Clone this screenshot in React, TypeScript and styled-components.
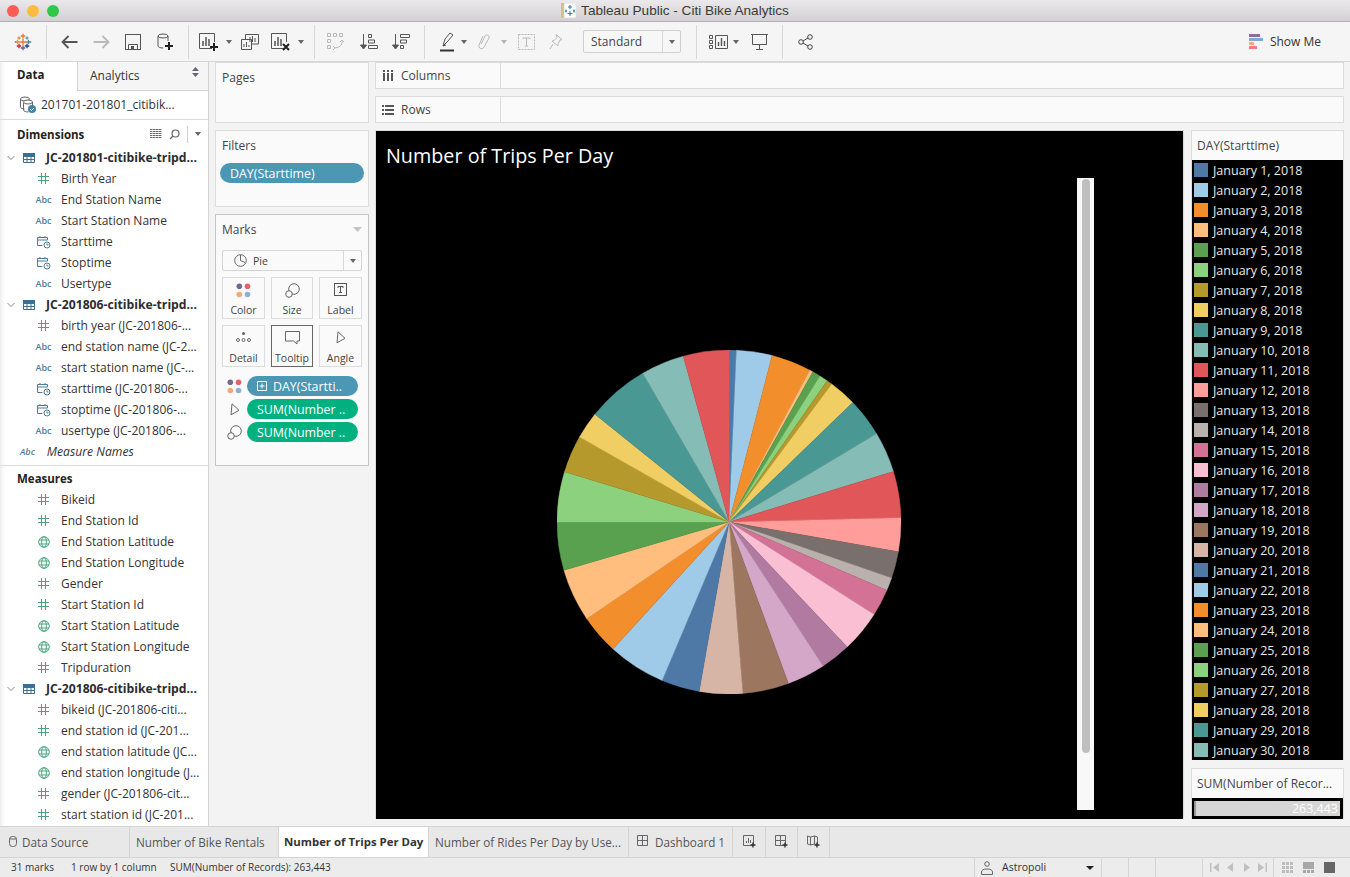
import * as React from 'react';
import styled, { createGlobalStyle } from 'styled-components';

const GlobalStyle = createGlobalStyle`
  html, body {
    margin: 0;
    padding: 0;
    height: 100%;
    overflow: hidden;
    background: #f3f3f3;
    font-family: "Open Sans", "Liberation Sans", sans-serif;
  }
  * { box-sizing: border-box; }
`;

const COLORS = [
  '#4e79a7', '#a0cbe8', '#f28e2b', '#ffbe7d', '#59a14f', '#8cd17d', '#b6992d', '#f1ce63', '#499894', '#86bcb6',
  '#e15759', '#ff9d9a', '#79706e', '#bab0ac', '#d37295', '#fabfd2', '#b07aa1', '#d4a6c8', '#9d7660', '#d7b5a6'
];

// end angle of every slice, clockwise from the top
const SLICE_ENDS = [
  2.5, 14.5, 28, 29.2, 31.9, 34.8, 36.7, 46, 59.1, 72.9, 88.6, 100, 109, 113.4, 122.5, 136.6, 146.8, 159.8, 175.4,
  190, 202.9, 222.4, 235.8, 253.7, 270, 287, 299.6, 308.8, 329.9, 344.6, 360
];

type FieldKind = 'hash' | 'abc' | 'date' | 'geo';
type Field = { kind: FieldKind; name: string };

const DIM_ONE: Field[] = [
  { kind: 'hash', name: 'Birth Year' },
  { kind: 'abc', name: 'End Station Name' },
  { kind: 'abc', name: 'Start Station Name' },
  { kind: 'date', name: 'Starttime' },
  { kind: 'date', name: 'Stoptime' },
  { kind: 'abc', name: 'Usertype' }
];
const DIM_TWO: Field[] = [
  { kind: 'hash', name: 'birth year (JC-201806-...' },
  { kind: 'abc', name: 'end station name (JC-2...' },
  { kind: 'abc', name: 'start station name (JC-...' },
  { kind: 'date', name: 'starttime (JC-201806-...' },
  { kind: 'date', name: 'stoptime (JC-201806-...' },
  { kind: 'abc', name: 'usertype (JC-201806-...' }
];
const MEASURES: Field[] = [
  { kind: 'hash', name: 'Bikeid' },
  { kind: 'hash', name: 'End Station Id' },
  { kind: 'geo', name: 'End Station Latitude' },
  { kind: 'geo', name: 'End Station Longitude' },
  { kind: 'hash', name: 'Gender' },
  { kind: 'hash', name: 'Start Station Id' },
  { kind: 'geo', name: 'Start Station Latitude' },
  { kind: 'geo', name: 'Start Station Longitude' },
  { kind: 'hash', name: 'Tripduration' }
];
const MEASURES_TWO: Field[] = [
  { kind: 'hash', name: 'bikeid (JC-201806-citi...' },
  { kind: 'hash', name: 'end station id (JC-201...' },
  { kind: 'geo', name: 'end station latitude (JC...' },
  { kind: 'geo', name: 'end station longitude (J...' },
  { kind: 'hash', name: 'gender (JC-201806-cit...' },
  { kind: 'hash', name: 'start station id (JC-201...' }
];

const Window = styled.div`
  width: 1350px;
  height: 877px;
  display: flex;
  flex-direction: column;
  overflow: hidden;
  background: #f3f3f3;
  color: #333;
`;

const TitleBar = styled.div`
  height: 22px;
  flex: none;
  display: flex;
  align-items: center;
  position: relative;
  justify-content: center;
  gap: 5px;
  background: linear-gradient(#ebe9eb, #d2d0d2);
  border-bottom: 1px solid #b0b0b0;
  font-family: "Liberation Sans", sans-serif;
  font-size: 13.6px;
  color: #3a3a3a;
`;

const Lights = styled.div`
  position: absolute;
  left: 7px;
  top: 5px;
  display: flex;
  gap: 8px;
`;

const Light = styled.span<{ $c: string }>`
  width: 12px;
  height: 12px;
  border-radius: 50%;
  background: ${p => p.$c};
`;

const Toolbar = styled.div`
  height: 40px;
  flex: none;
  display: flex;
  align-items: center;
  background: #f5f5f5;
  border-bottom: 1px solid #d6d6d6;
`;

const Slot = styled.div<{ $w: number; $off?: boolean }>`
  width: ${p => p.$w}px;
  height: 100%;
  flex: none;
  display: flex;
  align-items: center;
  justify-content: center;
  color: ${p => (p.$off ? '#b9b9b9' : '#555')};
`;

const Sep = styled.div<{ $l: number; $r: number }>`
  width: 1px;
  height: 34px;
  flex: none;
  margin: 0 ${p => p.$r}px 0 ${p => p.$l}px;
  background: #d8d8d8;
`;

const Caret = styled.span<{ $off?: boolean }>`
  width: 0;
  height: 0;
  border-left: 3.5px solid transparent;
  border-right: 3.5px solid transparent;
  border-top: 4px solid ${p => (p.$off ? '#b5b5b5' : '#666')};
`;

const BlackCaret = styled(Caret)`
  margin-left: auto;
  border-left-width: 4px;
  border-right-width: 4px;
  border-top: 4px solid #222;
`;

const Select = styled.div`
  width: 98px;
  height: 23px;
  margin-left: 15px;
  flex: none;
  display: flex;
  align-items: center;
  background: #f7f7f7;
  border: 1px solid #cfcfcf;
  border-radius: 2px;
  font-size: 12px;
  color: #444;
`;

const SelectText = styled.div`
  flex: 1;
  padding-left: 7px;
`;

const SelectArrow = styled.div`
  width: 18px;
  height: 100%;
  display: flex;
  align-items: center;
  justify-content: center;
  border-left: 1px solid #d8d8d8;
`;

const ShowMe = styled.div`
  margin-left: auto;
  margin-right: 29px;
  display: flex;
  align-items: center;
  gap: 6px;
  font-size: 12px;
  color: #333;
`;

const Body = styled.div`
  height: 764px;
  flex: none;
  display: flex;
`;

const DataPane = styled.aside`
  width: 209px;
  flex: none;
  background: #fff;
  border-right: 1px solid #d4d4d4;
  box-shadow: inset 5px 0 5px -4px #e4e4e4;
  overflow: hidden;
`;

const PaneTabs = styled.div`
  display: flex;
  height: 29px;
`;

const DataTab = styled.div`
  width: 78px;
  padding: 5px 0 0 17px;
  font-size: 11.5px;
  font-weight: 700;
  color: #222;
  border-right: 1px solid #d4d4d4;
`;

const AnalyticsTab = styled.div`
  flex: 1;
  display: flex;
  justify-content: space-between;
  padding: 5px 9px 0 12px;
  font-size: 12px;
  color: #333;
  background: #f5f5f5;
  border-bottom: 1px solid #d4d4d4;
`;

const SourceRow = styled.div`
  height: 29px;
  display: flex;
  align-items: center;
  gap: 4px;
  padding: 0 0 1px 19px;
  border-bottom: 1px solid #dcdcdc;
  font-size: 12px;
  color: #333;
  white-space: nowrap;
`;

const SectionHead = styled.div<{ $h: number }>`
  height: ${p => p.$h}px;
  display: flex;
  align-items: center;
  padding: 1px 0 0 17px;
  font-size: 11.5px;
  font-weight: 700;
  color: #222;
`;

const HeadTools = styled.div`
  margin-left: auto;
  display: flex;
  align-items: center;
  gap: 7px;
  padding-right: 7px;
  color: #666;
`;

const HeadDivider = styled.span`
  width: 1px;
  height: 17px;
  background: #d0d0d0;
`;

const GroupRow = styled.div`
  height: 21px;
  display: flex;
  align-items: center;
  padding-left: 7px;
  font-size: 12.2px;
  font-weight: 700;
  color: #2c2c2c;
  white-space: nowrap;
`;

const GroupName = styled.span`
  margin-left: 11px;
`;

const TableMark = styled.span`
  margin-left: 8px;
  display: flex;
`;

const FieldRow = styled.div`
  height: 21px;
  display: flex;
  align-items: center;
  padding-left: 33px;
  font-size: 12px;
  color: #333;
  white-space: nowrap;
`;

const FieldMark = styled.span<{ $c: string }>`
  width: 21px;
  margin-right: 7px;
  flex: none;
  display: flex;
  justify-content: center;
  color: ${p => p.$c};
`;

const AbcText = styled.span`
  font-size: 9px;
  font-weight: 600;
  color: #4e7d97;
`;

const NamesRow = styled.div`
  height: 21px;
  display: flex;
  align-items: center;
  padding: 0 0 0 20px;
  font-size: 12.2px;
  font-style: italic;
  color: #333;
  gap: 12px;
`;

const PaneRule = styled.div`
  height: 1px;
  margin-top: 3px;
  background: #dcdcdc;
`;

const ShelfColumn = styled.div`
  width: 154px;
  flex: none;
  margin: 0 6px 0 6px;
  display: flex;
  flex-direction: column;
  gap: 7px;
`;

const Card = styled.section<{ $h: number; $strong?: boolean }>`
  height: ${p => p.$h}px;
  padding: 3px 6px 0;
  background: #fafafa;
  border: 1px solid ${p => (p.$strong ? '#c6c6c6' : '#dcdcdc')};
  font-size: 12px;
  color: #444;
`;

const CardTitle = styled.div`
  padding-left: 0;
  height: 22px;
  display: flex;
  justify-content: space-between;
  align-items: center;
`;

const Pill = styled.div<{ $c: string }>`
  height: 20px;
  justify-self: stretch;
  border-radius: 10px;
  background: ${p => p.$c};
  color: #fff;
  font-size: 12.4px;
  display: flex;
  align-items: center;
  gap: 6px;
  padding-left: 10px;
  white-space: nowrap;
  overflow: hidden;
`;

const FilterPill = styled(Pill)`
  margin: 7px -2px 0 -2px;
`;

const MarkSelect = styled.div`
  height: 21px;
  margin: 10px 0 0;
  display: flex;
  align-items: center;
  background: #fafafa;
  border: 1px solid #d4d4d4;
  border-radius: 2px;
  font-size: 10.5px;
  color: #444;
`;

const MarkSelectText = styled.div`
  flex: 1;
  display: flex;
  align-items: center;
  gap: 6px;
  padding-left: 11px;
`;

const MarkSelectArrow = styled.div`
  width: 18px;
  height: 100%;
  display: flex;
  align-items: center;
  justify-content: center;
  border-left: 1px solid #d8d8d8;
`;

const MarkGrid = styled.div`
  margin-top: 6px;
  display: grid;
  grid-template-columns: 43px 42px 43px;
  grid-auto-rows: 42px;
  justify-content: space-between;
  row-gap: 6px;
`;

const MarkButton = styled.div<{ $on?: boolean }>`
  display: flex;
  flex-direction: column;
  align-items: center;
  justify-content: space-between;
  padding: 5px 0 1px;
  border: 1px solid ${p => (p.$on ? '#666' : '#dcdcdc')};
  font-size: 10.5px;
  color: #444;
  background: #fafafa;
`;

const MarkPills = styled.div`
  margin-top: 9px;
  display: flex;
  flex-direction: column;
  gap: 3px;
`;

const MarkPillRow = styled.div`
  display: grid;
  grid-template-columns: 25px 111px;
  align-items: center;
  justify-items: center;
`;

const Main = styled.div`
  flex: 1;
  min-width: 0;
  padding: 0 6px 7px 0;
  display: flex;
  flex-direction: column;
  gap: 7px;
`;

const Shelf = styled.div`
  height: 27px;
  flex: none;
  display: flex;
  background: #fafafa;
  border: 1px solid #dcdcdc;
`;

const ShelfLabel = styled.div`
  width: 125px;
  display: flex;
  align-items: center;
  gap: 4px;
  padding-left: 3px;
  font-size: 12px;
  color: #444;
  border-right: 1px solid #dcdcdc;
`;

const ShelfGlyph = styled.span`
  width: 18px;
  flex: none;
  display: flex;
  justify-content: center;
`;

const Stage = styled.div`
  flex: 1;
  min-height: 0;
  display: flex;
  gap: 7px;
`;

const VizPanel = styled.div`
  width: 809px;
  flex: none;
  background: #000;
  border: 1px solid #dcdcdc;
  border-bottom: none;
  overflow: hidden;
`;

const VizTitle = styled.div`
  height: 47px;
  padding: 11px 0 0 10px;
  color: #fff;
  font-size: 19.75px;
  line-height: 27px;
`;

const Plot = styled.div`
  display: flex;
  align-items: flex-start;
`;

const PieFrame = styled.svg`
  flex: none;
  margin: 172px 0 0 181px;
`;

const ScrollTrack = styled.div`
  width: 17px;
  height: 632px;
  margin-left: 176px;
  flex: none;
  padding: 1px 4px 0 5px;
  background: #f8f8f8;
`;

const ScrollThumb = styled.div`
  height: 574px;
  border-radius: 4px;
  background: #bfbfbf;
`;

const LegendColumn = styled.div`
  width: 153px;
  flex: none;
  display: flex;
  flex-direction: column;
  gap: 8px;
`;

const LegendHead = styled.div`
  height: 29px;
  flex: none;
  display: flex;
  align-items: center;
  padding-left: 5px;
  background: #fafafa;
  font-size: 12px;
  color: #444;
  white-space: nowrap;
`;

const LegendCard = styled.div`
  border: 1px solid #dcdcdc;
  border-bottom: none;
`;

const LegendBody = styled.div`
  height: 600px;
  background: #000;
  overflow: hidden;
`;

const LegendRow = styled.div`
  height: 20px;
  display: flex;
  align-items: center;
  gap: 5px;
  padding-left: 2px;
  color: #e9e9e9;
  font-size: 12.5px;
`;

const Swatch = styled.span<{ $c: string }>`
  width: 14px;
  height: 14px;
  flex: none;
  background: ${p => p.$c};
`;

const SizeCard = styled.div`
  flex: 1;
  display: flex;
  flex-direction: column;
  border: 1px solid #dcdcdc;
  border-bottom: none;
  background: #fafafa;
`;

const SizeBar = styled.div`
  flex: 1;
  border: 3px solid #000;
  border-left-width: 2px;
  background: linear-gradient(to right, #999 0 2px, #d6d6d6 2px);
  color: #fff;
  font-size: 12.5px;
  text-align: right;
  padding-right: 2px;
  line-height: 15px;
`;

const TabBar = styled.div`
  height: 31px;
  flex: none;
  display: flex;
  background: #e8e8e8;
  border-top: 1px solid #d4d4d4;
`;

const Tab = styled.div<{ $w: number; $on?: boolean; $pad?: number }>`
  width: ${p => p.$w}px;
  flex: none;
  display: flex;
  align-items: center;
  justify-content: ${p => (p.$pad ? 'flex-start' : 'center')};
  gap: 5px;
  padding: 0 0 1px ${p => p.$pad ?? 0}px;
  border-right: 1px solid #d4d4d4;
  background: ${p => (p.$on ? '#fff' : 'transparent')};
  font-size: ${p => (p.$on ? '11.4px' : '11.7px')};
  font-weight: ${p => (p.$on ? 700 : 400)};
  color: ${p => (p.$on ? '#333' : '#555')};
  white-space: nowrap;
  overflow: hidden;
`;

const StatusBar = styled.div`
  height: 20px;
  flex: none;
  display: flex;
  align-items: stretch;
  background: #ececec;
  border-top: 1px solid #d4d4d4;
  font-size: 10px;
  color: #333;
`;

const StatusText = styled.span<{ $w: number }>`
  width: ${p => p.$w}px;
  flex: none;
  display: flex;
  align-items: center;
  padding-bottom: 1px;
  white-space: nowrap;
`;

const StatusLead = styled.div`
  width: 974px;
  flex: none;
  padding-left: 11px;
  display: flex;
`;

const StatusCell = styled.div<{ $w: number; $gap?: number; $pad?: number; $end?: number }>`
  width: ${p => p.$w}px;
  flex: none;
  display: flex;
  align-items: center;
  gap: ${p => p.$gap ?? 0}px;
  padding: 0 ${p => p.$end ?? 0}px 0 ${p => p.$pad ?? 0}px;
  border-left: 1px solid #d4d4d4;
`;

const UserName = styled.span`
  font-size: 10.5px;
  padding-bottom: 1px;
`;

const Cross = ({ x, y, s, c }: { x: number; y: number; s: number; c: string }) => (
  <path d={`M${x - s} ${y}H${x + s}M${x} ${y - s}V${y + s}`} stroke={c} strokeWidth={s > 2 ? 1.3 : 1} fill="none" />
);

const TableauLogo = () => (
  <svg width="18" height="18" viewBox="0 0 18 18">
    <Cross x={9} y={9} s={3.5} c="#e8762d" />
    <Cross x={9} y={3} s={2.2} c="#e8762d" />
    <Cross x={9} y={15} s={2.2} c="#5b6591" />
    <Cross x={3.5} y={9} s={2.2} c="#eb912c" />
    <Cross x={14.5} y={9} s={2.2} c="#5b879b" />
    <Cross x={5} y={5} s={1.7} c="#e8762d" />
    <Cross x={13} y={5} s={1.7} c="#59879b" />
    <Cross x={5} y={13} s={2.2} c="#c72035" />
    <Cross x={13} y={13} s={2.2} c="#1f457e" />
    <Cross x={1.5} y={9} s={0.9} c="#7099a6" />
    <Cross x={16.5} y={9} s={0.9} c="#7099a6" />
  </svg>
);

const DocLogo = () => (
  <svg width="15" height="15" viewBox="0 0 15 15">
    <rect x="0" y="0" width="4" height="15" fill="#d4c08c" />
    <rect x="3" y="0" width="12" height="15" fill="#fdfdfd" stroke="#c9c9c9" strokeWidth=".5" />
    <path d="M9 2v4M7 4h4M9 8v5M6.5 10.500h5M5 6.500v3M4 8h2M13 6.500v3M12 8h2" stroke="#2f7fb0" strokeWidth="1.100" />
  </svg>
);

const BackIcon = ({ flip }: { flip?: boolean }) => (
  <svg width="17" height="14" viewBox="0 0 17 14" fill="none" stroke="currentColor" strokeWidth="1.800" style={flip ? { transform: 'scaleX(-1)' } : undefined}>
    <path d="M16.500 7H1.500M7.500 1L1.500 7l6 6" />
  </svg>
);

const SaveIcon = () => (
  <svg width="16" height="16" viewBox="0 0 16 16" fill="none" stroke="currentColor" strokeWidth="1">
    <rect x=".5" y=".5" width="15" height="15" />
    <path d="M3.500 15.500v-5h9v5" />
    <rect x="6" y="12" width="3" height="3" fill="currentColor" stroke="none" />
  </svg>
);

const NewSourceIcon = () => (
  <svg width="17" height="18" viewBox="0 0 17 18" fill="none" stroke="currentColor">
    <ellipse cx="6" cy="3" rx="5" ry="2" />
    <path d="M1 3v10c0 1 2 2 5 2M11 3v5" />
    <path d="M12 9v8M8 13h8" stroke="#222" strokeWidth="2" />
  </svg>
);

const BarsPlus = ({ mark }: { mark: 'plus' | 'x' }) => (
  <svg width="20" height="18" viewBox="0 0 20 18" fill="none" stroke="currentColor">
    <path d="M13 15.500H.500V.500h15V9" />
    <path d="M4 13V8M7 13V4M10 13V6" strokeWidth="1.500" />
    {mark === 'plus' ? (
      <path d="M15 10v8M11 14h8" stroke="#222" strokeWidth="2" />
    ) : (
      <path d="M12 11l6 6M18 11l-6 6" stroke="#222" strokeWidth="2" />
    )}
  </svg>
);

const DuplicateIcon = () => (
  <svg width="18" height="16" viewBox="0 0 18 16" fill="none" stroke="currentColor">
    <path d="M4.500 5V.500h13V10H11" />
    <path d="M.500 5.500h10v10H.500z" fill="#f5f5f5" />
    <path d="M9 8V3M11.500 8V2M14 8V4M3 13v-3M5.500 13V8M8 13v-2" />
  </svg>
);

const SwapIcon = () => (
  <svg width="18" height="18" viewBox="0 0 18 18" fill="none" stroke="currentColor">
    <path d="M.500.500h3v3h-3zM6.500.500h3v3h-3zM12.500.500h3v3h-3zM.500 6.500h3v3h-3zM.500 12.500h3v3h-3z" />
    <path d="M15 7c1 4-1 7-7 8M6 13l2 2-2 2M13 9l2-2 2 2" />
  </svg>
);

const SortIcon = ({ desc }: { desc?: boolean }) => (
  <svg width="18" height="17" viewBox="0 0 18 17" fill="none" stroke="currentColor">
    <path d="M3.500 1v13" />
    <path d="M.500 12l3 4 3-4z" fill="currentColor" />
    {desc ? (
      <path d="M8.500 1.500h9v3h-9zM8.500 7h6v3h-6zM8.500 12.500h3v3h-3z" />
    ) : (
      <path d="M8.500 1.500h3v3h-3zM8.500 7h6v3h-6zM8.500 12.500h9v3h-9z" />
    )}
  </svg>
);

const HighlightIcon = () => (
  <svg width="14" height="20" viewBox="0 0 14 20" fill="none" stroke="currentColor">
    <path d="M3 14L5 7l5-6 3 2-5 6z" />
    <path d="M3 14l3-1" />
    <path d="M0 18.500h14" stroke="#333" strokeWidth="2" />
  </svg>
);

const ClipIcon = () => (
  <svg width="14" height="18" viewBox="0 0 14 18" fill="none" stroke="currentColor">
    <path d="M4 11l4-8c1-2 5-1 4 2l-5 9c-1 3-6 2-5-2l4-9" />
  </svg>
);

const TextBoxIcon = () => (
  <svg width="17" height="16" viewBox="0 0 17 16" fill="none" stroke="currentColor" strokeDasharray="2 1">
    <rect x=".5" y=".5" width="16" height="15" />
    <path d="M5 5V4h7v1M8.500 4v8M7 12h3" strokeDasharray="none" />
  </svg>
);

const LabelIcon = () => (
  <svg width="13" height="13" viewBox="0 0 13 13" fill="none" stroke="#555">
    <rect x=".5" y=".5" width="12" height="12" />
    <path d="M4 5V3.500h5V5M6.500 3.500v6M5 9.500h3" />
  </svg>
);

const PinIcon = () => (
  <svg width="14" height="16" viewBox="0 0 14 16" fill="none" stroke="currentColor">
    <path d="M7 .5l6 5-2 .5-2 4v2L3 7l2-.5 3-3zM4 10l-3 5" />
  </svg>
);

const ShowMeBars = () => (
  <svg width="15" height="16" viewBox="0 0 15 16">
    <rect x="0" y="0" width="11" height="3" fill="#8a6f9c" />
    <rect x="0" y="4" width="14" height="3" fill="#7ea9d1" />
    <rect x="0" y="8" width="5" height="3" fill="#f2a980" />
    <rect x="0" y="12" width="8" height="3" fill="#f47a8a" />
  </svg>
);

const ViewCardsIcon = () => (
  <svg width="19" height="14" viewBox="0 0 19 14" fill="none" stroke="currentColor">
    <path d="M.500.500h3v3h-3zM.500 5.500h3v3h-3zM.500 10.500h3v3h-3z" />
    <path d="M6.500.500h12v13h-12z" />
    <path d="M9.500 11V7M12.500 11V3M15.500 11V6" strokeWidth="1.400" />
  </svg>
);

const PresentIcon = () => (
  <svg width="17" height="16" viewBox="0 0 17 16" fill="none" stroke="currentColor">
    <path d="M0 .5h17M1.500 1v9.500h14V1M8.500 10.500V15M5 15.500h7" />
  </svg>
);

const ShareIcon = () => (
  <svg width="15" height="16" viewBox="0 0 15 16" fill="none" stroke="#444">
    <circle cx="3" cy="8" r="2.300" />
    <circle cx="12" cy="3" r="2.300" />
    <circle cx="12" cy="13" r="2.300" />
    <path d="M5 7l5-3M5 9l5 3" />
  </svg>
);

const HashIcon = () => (
  <svg width="11" height="11" viewBox="0 0 11 11" fill="none" stroke="currentColor">
    <path d="M3.500 0v11M7.500 0v11M0 3.500h11M0 7.500h11" />
  </svg>
);

const CalendarIcon = () => (
  <svg width="14" height="14" viewBox="0 0 14 14" fill="none" stroke="currentColor">
    <path d="M5.500 10.500h-5v-8h10V5M.5 5h10M3 1v2M8 1v2" />
    <circle cx="10" cy="10" r="3" fill="#fff" />
    <path d="M10 8.500V10h1.500" />
  </svg>
);

const GlobeIcon = () => (
  <svg width="12" height="12" viewBox="0 0 12 12" fill="none" stroke="currentColor">
    <circle cx="6" cy="6" r="5.300" />
    <ellipse cx="6" cy="6" rx="2.300" ry="5.300" />
    <path d="M1 4h10M1 8h10" />
  </svg>
);

const TableIcon = () => (
  <svg width="12" height="10" viewBox="0 0 12 10" fill="none" stroke="#3d6f8e">
    <path d="M.5.500h11v9H.5zM.5 3.500h11M.5 6.500h11M4 3.500v6M8 3.500v6" />
    <rect x="0" y="0" width="12" height="3" fill="#3d6f8e" stroke="none" />
  </svg>
);

const Chevron = () => (
  <svg width="8" height="6" viewBox="0 0 8 6" fill="none" stroke="#888">
    <path d="M.5 1L4 4.500 7.500 1" />
  </svg>
);

const SourceIcon = () => (
  <svg width="18" height="18" viewBox="0 0 18 18" fill="none" stroke="#666">
    <ellipse cx="6" cy="3" rx="4.500" ry="2" />
    <ellipse cx="9" cy="6" rx="4.500" ry="2" fill="#fff" />
    <path d="M1.500 3v8c0 1 2 2 4 2M4.500 7v7c0 1 2 2 5 2M13.500 6v4" />
    <circle cx="13" cy="13" r="4" fill="#3f85a8" stroke="none" />
    <path d="M11 13l1.500 1.500L15 12" stroke="#fff" />
  </svg>
);

const GridIcon = () => (
  <svg width="12" height="10" viewBox="0 0 12 10" fill="#666">
    {[0, 2, 4, 6, 8].map(y => [0, 3, 6, 9].map(x => <rect key={`${x}-${y}`} x={x} y={y} width="2.500" height="1" />))}
  </svg>
);

const SearchIcon = () => (
  <svg width="11" height="11" viewBox="0 0 11 11" fill="none" stroke="#666" strokeWidth="1.200">
    <circle cx="6.500" cy="4.500" r="3.500" />
    <path d="M4 7L1 10" />
  </svg>
);

const PieMarkIcon = () => (
  <svg width="13" height="13" viewBox="0 0 13 13" fill="none" stroke="#666">
    <circle cx="6.500" cy="6.500" r="5.800" />
    <path d="M6.500 6.500V1M6.500 6.500l4.500 2" />
  </svg>
);

const ColorDots = () => (
  <svg width="15" height="15" viewBox="0 0 15 15">
    <circle cx="3.300" cy="3.300" r="2.800" fill="#7b6888" />
    <circle cx="11.500" cy="3.300" r="2.800" fill="#e4606d" />
    <circle cx="3.300" cy="11.500" r="2.800" fill="#f2a877" />
    <circle cx="11.500" cy="11.500" r="2.800" fill="#8bb0d6" />
  </svg>
);

const SizeIcon = () => (
  <svg width="15" height="15" viewBox="0 0 15 15" fill="none" stroke="#666">
    <circle cx="9" cy="6" r="5.300" />
    <circle cx="4" cy="11" r="3.300" fill="#fafafa" />
  </svg>
);

const DetailIcon = () => (
  <svg width="15" height="12" viewBox="0 0 15 12" fill="none" stroke="#666">
    <circle cx="7.500" cy="2.500" r="1.500" fill="#666" stroke="none" />
    <circle cx="2" cy="9" r="1.500" />
    <circle cx="7.500" cy="9" r="1.500" />
    <circle cx="13" cy="9" r="1.500" />
  </svg>
);

const TooltipIcon = () => (
  <svg width="15" height="14" viewBox="0 0 15 14" fill="none" stroke="#666">
    <path d="M.5.500h14v9.500h-2.500v3L8.500 10H.5z" />
  </svg>
);

const AngleIcon = () => (
  <svg width="11" height="13" viewBox="0 0 11 13" fill="none" stroke="#666">
    <path d="M3 .8l7 6.500-8 4.500z" />
  </svg>
);

const ExpandBox = () => (
  <svg width="10" height="10" viewBox="0 0 10 10" fill="none" stroke="#fff">
    <path d="M.5.500h9v9h-9zM5 2.500v5M2.500 5h5" />
  </svg>
);

const CylinderIcon = () => (
  <svg width="8" height="11" viewBox="0 0 8 11" fill="none" stroke="#666">
    <rect x=".5" y=".5" width="7" height="10" rx="3" />
    <path d="M.5 3h7" />
  </svg>
);

const DashIcon = ({ plus }: { plus?: boolean }) => (
  <svg width="13" height="13" viewBox="0 0 13 13" fill="none" stroke="#666">
    <path d="M.500.500h10v10H.500zM5.500.500v10M.500 5.500h10" />
    {plus && <path d="M10 7.500v5M7.500 10h5" stroke="#333" strokeWidth="1.400" />}
  </svg>
);

const SheetPlus = () => (
  <svg width="13" height="13" viewBox="0 0 13 13" fill="none" stroke="#666">
    <path d="M.500.500h10v10H.500zM3.500 8V6M5.500 8V3M7.500 8V5" />
    <path d="M10 7.500v5M7.500 10h5" stroke="#333" strokeWidth="1.400" />
  </svg>
);

const StoryPlus = () => (
  <svg width="13" height="13" viewBox="0 0 13 13" fill="none" stroke="#666">
    <path d="M.500 1l3 1 4-1 3 1v8l-3-1-4 1-3-1zM3.500 2v8M7.500 1v8" />
    <path d="M10 7.500v5M7.500 10h5" stroke="#333" strokeWidth="1.400" />
  </svg>
);

const UserIcon = () => (
  <svg width="12" height="14" viewBox="0 0 12 14" fill="none" stroke="#666">
    <circle cx="6" cy="3" r="2.300" />
    <path d="M.5 13.500v-2.500c0-2 2-3 5.500-3s5.500 1 5.500 3v2.500z" />
  </svg>
);

const PagerIcon = ({ d }: { d: string }) => (
  <svg width="9" height="9" viewBox="0 0 9 9" fill="#c0c0c0">
    <path d={d} />
  </svg>
);

const FieldIcon = ({ kind }: { kind: FieldKind }) => {
  if (kind === 'abc') return <FieldMark $c="#4e7d97"><AbcText>Abc</AbcText></FieldMark>;
  if (kind === 'date') return <FieldMark $c="#4e7d97"><CalendarIcon /></FieldMark>;
  if (kind === 'geo') return <FieldMark $c="#4aa57f"><GlobeIcon /></FieldMark>;
  return <FieldMark $c="#4aa57f"><HashIcon /></FieldMark>;
};

const FieldList = ({ items }: { items: Field[] }) => (
  <React.Fragment>
    {items.map(f => (
      <FieldRow key={f.name}>
        <FieldIcon kind={f.kind} />
        {f.name}
      </FieldRow>
    ))}
  </React.Fragment>
);

const Group = ({ name }: { name: string }) => (
  <GroupRow>
    <Chevron />
    <TableMark><TableIcon /></TableMark>
    <GroupName>{name}</GroupName>
  </GroupRow>
);

const Pie = () => {
  const r = 172;
  const point = (deg: number) => {
    const a = (deg * Math.PI) / 180;
    return `${(r + r * Math.sin(a)).toFixed(2)} ${(r - r * Math.cos(a)).toFixed(2)}`;
  };
  return (
    <PieFrame width={344} height={344} viewBox="0 0 344 344">
      {SLICE_ENDS.map((end, i) => {
        const start = i === 0 ? 0 : SLICE_ENDS[i - 1];
        const c = COLORS[i % COLORS.length];
        return (
          <path
            key={end}
            d={`M${r} ${r}L${point(start)}A${r} ${r} 0 0 1 ${point(end)}Z`}
            fill={c}
            stroke={c}
            strokeWidth={0.4}
          />
        );
      })}
    </PieFrame>
  );
};

const App = () => {
  return (
    <React.Fragment>
      <GlobalStyle />
      <Window>
        <TitleBar>
          <Lights>
            <Light $c="#fc5b57" />
            <Light $c="#fdbc40" />
            <Light $c="#2fc84a" />
          </Lights>
          <DocLogo />
          Tableau Public - Citi Bike Analytics
        </TitleBar>

        <Toolbar>
          <Slot $w={46}><TableauLogo /></Slot>
          <Sep $l={0} $r={6} />
          <Slot $w={32}><BackIcon /></Slot>
          <Slot $w={32} $off><BackIcon flip /></Slot>
          <Slot $w={32}><SaveIcon /></Slot>
          <Slot $w={32}><NewSourceIcon /></Slot>
          <Sep $l={7} $r={5} />
          <Slot $w={30}><BarsPlus mark="plus" /></Slot>
          <Slot $w={10}><Caret /></Slot>
          <Slot $w={32}><DuplicateIcon /></Slot>
          <Slot $w={30}><BarsPlus mark="x" /></Slot>
          <Slot $w={10}><Caret /></Slot>
          <Sep $l={8} $r={5} />
          <Slot $w={32} $off><SwapIcon /></Slot>
          <Slot $w={34}><SortIcon /></Slot>
          <Slot $w={30}><SortIcon desc /></Slot>
          <Sep $l={8} $r={9} />
          <Slot $w={26}><HighlightIcon /></Slot>
          <Slot $w={8}><Caret /></Slot>
          <Slot $w={32} $off><ClipIcon /></Slot>
          <Slot $w={8}><Caret $off /></Slot>
          <Slot $w={36} $off><TextBoxIcon /></Slot>
          <Slot $w={24} $off><PinIcon /></Slot>
          <Select>
            <SelectText>Standard</SelectText>
            <SelectArrow><Caret /></SelectArrow>
          </Select>
          <Sep $l={15} $r={6} />
          <Slot $w={30}><ViewCardsIcon /></Slot>
          <Slot $w={6}><Caret /></Slot>
          <Slot $w={40}><PresentIcon /></Slot>
          <Sep $l={3} $r={6} />
          <Slot $w={32}><ShareIcon /></Slot>
          <ShowMe><ShowMeBars />Show Me</ShowMe>
        </Toolbar>

        <Body>
          <DataPane>
            <PaneTabs>
              <DataTab>Data</DataTab>
              <AnalyticsTab>
                Analytics
                <svg width="7" height="10" viewBox="0 0 7 10" fill="#667">
                  <path d="M3.500 0L7 4H0zM0 6h7L3.500 10z" />
                </svg>
              </AnalyticsTab>
            </PaneTabs>
            <SourceRow><SourceIcon />201701-201801_citibik...</SourceRow>
            <SectionHead $h={27}>
              Dimensions
              <HeadTools>
                <GridIcon />
                <SearchIcon />
                <HeadDivider />
                <Caret />
              </HeadTools>
            </SectionHead>
            <Group name="JC-201801-citibike-tripd..." />
            <FieldList items={DIM_ONE} />
            <Group name="JC-201806-citibike-tripd..." />
            <FieldList items={DIM_TWO} />
            <NamesRow><AbcText>Abc</AbcText>Measure Names</NamesRow>
            <PaneRule />
            <SectionHead $h={23}>Measures</SectionHead>
            <FieldList items={MEASURES} />
            <Group name="JC-201806-citibike-tripd..." />
            <FieldList items={MEASURES_TWO} />
          </DataPane>

          <ShelfColumn>
            <Card $h={61}><CardTitle>Pages</CardTitle></Card>
            <Card $h={77}>
              <CardTitle>Filters</CardTitle>
              <FilterPill $c="#4b97b4">DAY(Starttime)</FilterPill>
            </Card>
            <Card $h={252} $strong>
              <CardTitle>
                Marks
                <svg width="9" height="5" viewBox="0 0 9 5" fill="#c4c4c4"><path d="M0 0h9L4.500 5z" /></svg>
              </CardTitle>
              <MarkSelect>
                <MarkSelectText><PieMarkIcon />Pie</MarkSelectText>
                <MarkSelectArrow><Caret /></MarkSelectArrow>
              </MarkSelect>
              <MarkGrid>
                <MarkButton><ColorDots />Color</MarkButton>
                <MarkButton><SizeIcon />Size</MarkButton>
                <MarkButton><LabelIcon />Label</MarkButton>
                <MarkButton><DetailIcon />Detail</MarkButton>
                <MarkButton $on><TooltipIcon />Tooltip</MarkButton>
                <MarkButton><AngleIcon />Angle</MarkButton>
              </MarkGrid>
              <MarkPills>
                <MarkPillRow>
                  <ColorDots />
                  <Pill $c="#4b97b4"><ExpandBox />DAY(Startti..</Pill>
                </MarkPillRow>
                <MarkPillRow>
                  <AngleIcon />
                  <Pill $c="#00b180">SUM(Number ..</Pill>
                </MarkPillRow>
                <MarkPillRow>
                  <SizeIcon />
                  <Pill $c="#00b180">SUM(Number ..</Pill>
                </MarkPillRow>
              </MarkPills>
            </Card>
          </ShelfColumn>

          <Main>
            <Shelf>
              <ShelfLabel>
                <ShelfGlyph>
                  <svg width="10" height="11" viewBox="0 0 10 11" fill="#555">
                    <rect x="0" y="0" width="2" height="2" />
                    <rect x="4" y="0" width="2" height="2" />
                    <rect x="8" y="0" width="2" height="2" />
                    <rect x="0" y="3" width="2" height="8" />
                    <rect x="4" y="3" width="2" height="8" />
                    <rect x="8" y="3" width="2" height="8" />
                  </svg>
                </ShelfGlyph>
                Columns
              </ShelfLabel>
            </Shelf>
            <Shelf>
              <ShelfLabel>
                <ShelfGlyph>
                  <svg width="12" height="10" viewBox="0 0 12 10" fill="#555">
                    <rect x="0" y="0" width="2" height="2" />
                    <rect x="3" y="0" width="9" height="2" />
                    <rect x="0" y="4" width="2" height="2" />
                    <rect x="3" y="4" width="9" height="2" />
                    <rect x="0" y="8" width="2" height="2" />
                    <rect x="3" y="8" width="9" height="2" />
                  </svg>
                </ShelfGlyph>
                Rows
              </ShelfLabel>
            </Shelf>
            <Stage>
              <VizPanel>
                <VizTitle>Number of Trips Per Day</VizTitle>
                <Plot>
                  <Pie />
                  <ScrollTrack><ScrollThumb /></ScrollTrack>
                </Plot>
              </VizPanel>
              <LegendColumn>
                <LegendCard>
                  <LegendHead>DAY(Starttime)</LegendHead>
                  <LegendBody>
                    {Array.from({ length: 30 }, (_, i) => (
                      <LegendRow key={i}>
                        <Swatch $c={COLORS[i % COLORS.length]} />
                        January {i + 1}, 2018
                      </LegendRow>
                    ))}
                  </LegendBody>
                </LegendCard>
                <SizeCard>
                  <LegendHead>SUM(Number of Recor...</LegendHead>
                  <SizeBar>263,443</SizeBar>
                </SizeCard>
              </LegendColumn>
            </Stage>
          </Main>
        </Body>

        <TabBar>
          <Tab $w={130} $pad={9}><CylinderIcon />Data Source</Tab>
          <Tab $w={149} $pad={6}>Number of Bike Rentals</Tab>
          <Tab $w={150} $pad={5}  $on>Number of Trips Per Day</Tab>
          <Tab $w={200} $pad={6}>Number of Rides Per Day by Use...</Tab>
          <Tab $w={104} $pad={8}><DashIcon />Dashboard 1</Tab>
          <Tab $w={33}><SheetPlus /></Tab>
          <Tab $w={32}><DashIcon plus /></Tab>
          <Tab $w={32}><StoryPlus /></Tab>
        </TabBar>

        <StatusBar>
          <StatusLead>
            <StatusText $w={60}>31 marks</StatusText>
            <StatusText $w={99}>1 row by 1 column</StatusText>
            <StatusText $w={200}>SUM(Number of Records): 263,443</StatusText>
          </StatusLead>
          <StatusCell $w={127} $pad={6} $end={7} $gap={9}>
            <UserIcon />
            <UserName>Astropoli</UserName>
            <BlackCaret />
          </StatusCell>
          <StatusCell $w={27} />
          <StatusCell $w={27} />
          <StatusCell $w={47} />
          <StatusCell $w={71} $pad={7} $gap={7}>
            <PagerIcon d="M0 0h1.500v9H0zM9 0v9L3 4.500z" />
            <PagerIcon d="M7 0v9L1 4.500z" />
            <PagerIcon d="M2 0v9l6-4.500z" />
            <PagerIcon d="M0 0v9l6-4.500zM7.500 0H9v9H7.500z" />
          </StatusCell>
          <StatusCell $w={76} $pad={8} $gap={10}>
            <svg width="11" height="11" viewBox="0 0 11 11" fill="#bdbdbd">
              {[0, 4, 8].map(y => [0, 4, 8].map(x => <rect key={`${x}-${y}`} x={x} y={y} width="3" height="3" />))}
            </svg>
            <svg width="11" height="11" viewBox="0 0 11 11" fill="#a8a8a8">
              <rect x="0" y="0" width="11" height="7" />
              <rect x="0" y="8" width="3" height="3" />
              <rect x="4" y="8" width="3" height="3" />
              <rect x="8" y="8" width="3" height="3" />
            </svg>
            <svg width="11" height="11" viewBox="0 0 11 11" fill="#666">
              <rect x="0" y="0" width="11" height="11" />
            </svg>
          </StatusCell>
        </StatusBar>
      </Window>
    </React.Fragment>
  );
};

export default App;
